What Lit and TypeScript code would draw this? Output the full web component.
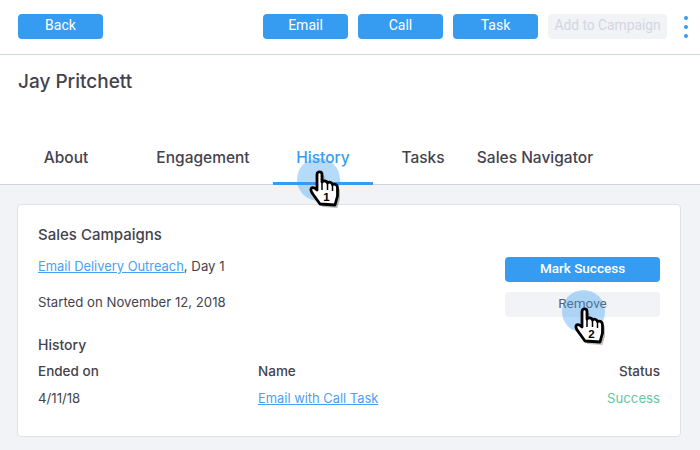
import { LitElement, html, css, svg } from "lit";
import { customElement } from "lit/decorators.js";

const outline = "M10 34 L3.500 25 C2 23 .5 21 1 19 C1.500 17 4 17 7 20 L7 4.500 C7 1 12 1 12 4.500 L12 12 C14 10.500 16.500 10.500 17.500 13 C19 11.500 21.500 12 22.500 14.500 C24.500 13.500 27.500 14.500 27.500 18 L27.500 26 L25 35 Z";

const hand = (n: string) => svg`
  <path d=${outline} transform="translate(2.500 3)" fill="#000" opacity=".25"/>
  <path d=${outline} fill="#fff" stroke="#000" stroke-width="2.800" stroke-linejoin="round"/>
  <path d="M12 12 L12 20 M17.500 13 L17.500 20 M22.500 14.500 L22.500 21" stroke="#000" stroke-width="1.500" fill="none"/>
  <text x="16.500" y="31" text-anchor="middle" font-family="Liberation Sans, sans-serif" font-weight="700" font-size="11.500" fill="#000">${n}</text>
`;

@customElement("app-root")
export class AppRoot extends LitElement {
  static styles = css`
    :host { display: block; width: 700px; height: 450px; overflow: hidden; position: relative; background: #f1f3f7; font-family: "Inter", "Liberation Sans", sans-serif; color: #44434d; }
    * { box-sizing: border-box; }
    .top { background: #fff; }
    .bar { height: 55px; border-bottom: 1px solid #d0d6de; display: flex; align-items: flex-start; padding: 14px 0 0 18px; }
    .btn { height: 25px; border-radius: 4px; display: flex; align-items: center; justify-content: center; font: 400 14px/25px Roboto, sans-serif; background: #369cf2; color: #fff; width: 85px; flex: none; padding-bottom: 2px; }
    .actions { display: flex; gap: 10px; margin-left: 160px; }
    .disabled { background: #f1f3f7; color: #d3d6df; width: 119px; font-size: 13.800px; white-space: nowrap; }
    .dots { display: flex; flex-direction: column; gap: 5px; margin: 2px 0 0 17px; }
    .dots i { display: block; width: 4px; height: 4px; border-radius: 50%; background: #369cf2; }
    .name { height: 66px; padding: 15px 18px 0; font-size: 19px; font-weight: 500; line-height: 24px; }
    .tabs { height: 64px; display: grid; grid-template-columns: 100px 157px 100px 100px 124px; padding-left: 16px; border-bottom: 1px solid #d0d6de; }
    .tab { display: flex; align-items: center; justify-content: center; height: 64px; padding-top: 8px; font-size: 15.500px; font-weight: 500; white-space: nowrap; }
    .eng { margin-left: 17px; }
    .active { color: #369cf2; border-bottom: 3px solid #369cf2; padding-top: 11px; }
    .card { margin: 19px 19px 0 17px; height: 233px; background: #fff; border: 1px solid #dfe2e7; border-radius: 4px; padding: 20px 20px 0; }
    .h { font-size: 15px; font-weight: 500; line-height: 20px; }
    .camp { display: flex; justify-content: space-between; align-items: flex-start; }
    .line { font-size: 13.200px; line-height: 20px; }
    a { color: #4a9ff5; text-decoration: underline; font-size: 12.900px; }
    .left { display: flex; flex-direction: column; gap: 15px; padding-top: 11px; }
    .right { display: flex; flex-direction: column; gap: 10px; margin-top: 12px; }
    .wide { width: 155px; font-size: 13.500px; font-weight: 500; }
    .muted { background: #f1f3f7; color: #5b5d68; font-weight: 400; }
    .hist { margin-top: 18px; font-size: 14px; }
    .row { display: grid; grid-template-columns: 220px 1fr auto; line-height: 20px; font-size: 13.200px; }
    .row.head { font-weight: 500; font-size: 13.500px; margin-top: 6px; }
    .row.body { margin-top: 7px; }
    .ok { color: #64c8a4; }
    .overlay { position: absolute; border-radius: 50%; width: 43px; height: 43px; background: rgba(54,156,242,.36); }
    .c1 { left: 297px; top: 158px; }
    .c2 { left: 562px; top: 290px; }
    svg.hand { position: absolute; width: 30px; height: 38px; overflow: visible; }
    .h1 { left: 310px; top: 170px; }
    .h2 { left: 575px; top: 307px; }
  `;

  render() {
    return html`
      <div class="top">
        <div class="bar">
          <div class="btn">Back</div>
          <div class="actions">
            <div class="btn">Email</div>
            <div class="btn">Call</div>
            <div class="btn">Task</div>
            <div class="btn disabled">Add to Campaign</div>
          </div>
          <div class="dots"><i></i><i></i><i></i></div>
        </div>
        <div class="name">Jay Pritchett</div>
        <div class="tabs">
          <div class="tab">About</div>
          <div class="tab eng">Engagement</div>
          <div class="tab active">History</div>
          <div class="tab">Tasks</div>
          <div class="tab">Sales Navigator</div>
        </div>
      </div>
      <div class="card">
        <div class="h">Sales Campaigns</div>
        <div class="camp">
          <div class="left">
            <div class="line"><a>Email Delivery Outreach</a>, Day 1</div>
            <div class="line">Started on November 12, 2018</div>
          </div>
          <div class="right">
            <div class="btn wide">Mark Success</div>
            <div class="btn wide muted">Remove</div>
          </div>
        </div>
        <div class="hist h">History</div>
        <div class="row head"><span>Ended on</span><span>Name</span><span>Status</span></div>
        <div class="row body"><span>4/11/18</span><span><a>Email with Call Task</a></span><span class="ok">Success</span></div>
      </div>
      <div class="overlay c1"></div>
      <div class="overlay c2"></div>
      <svg class="hand h1" viewBox="0 0 30 38">${hand("1")}</svg>
      <svg class="hand h2" viewBox="0 0 30 38">${hand("2")}</svg>
    `;
  }
}
